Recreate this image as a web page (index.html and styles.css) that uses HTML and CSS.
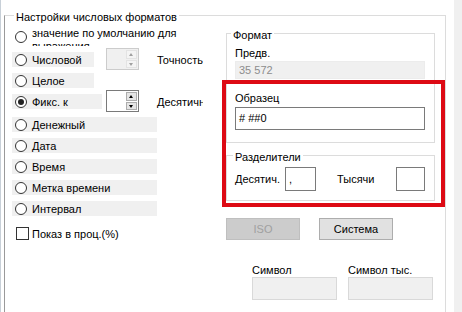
FILE: index.html
```html
<!DOCTYPE html>
<html lang="ru">
<head>
    <meta charset="utf-8">
    <title>Настройки числовых форматов</title>
    <link rel="stylesheet" href="styles.css">
</head>
<body>
<div class="side"></div>
<div class="group outer">
    <span class="caption">Настройки числовых форматов</span>
    <div class="cols">
        <div class="left">
            <div class="opt opt-first">
                <span class="radio"></span>
                <span class="label two-lines">значение по умолчанию для выражения</span>
            </div>
            <div class="opt">
                <span class="pick w82"><span class="radio"></span><span class="label">Числовой</span></span>
                <span class="spin disabled"><span class="spin-text"></span><span class="spin-btns"><i class="up"></i><i class="down"></i></span></span>
                <span class="spin-label">Точность</span>
            </div>
            <div class="opt">
                <span class="pick w82"><span class="radio"></span><span class="label">Целое</span></span>
            </div>
            <div class="opt">
                <span class="pick w90"><span class="radio on"></span><span class="label">Фикс. к</span></span>
                <span class="spin near"><span class="spin-text"></span><span class="spin-btns"><i class="up"></i><i class="down"></i></span></span>
                <span class="spin-label">Десятичные знаки</span>
            </div>
            <div class="opt opt-gap">
                <span class="pick w145"><span class="radio"></span><span class="label">Денежный</span></span>
            </div>
            <div class="opt">
                <span class="pick w145"><span class="radio"></span><span class="label">Дата</span></span>
            </div>
            <div class="opt">
                <span class="pick w145"><span class="radio"></span><span class="label">Время</span></span>
            </div>
            <div class="opt">
                <span class="pick w145"><span class="radio"></span><span class="label">Метка времени</span></span>
            </div>
            <div class="opt">
                <span class="pick w145"><span class="radio"></span><span class="label">Интервал</span></span>
            </div>
            <div class="opt opt-check">
                <span class="check"></span><span class="label">Показ в проц.(%)</span>
            </div>
        </div>

        <div class="right">
            <div class="group format">
                <span class="caption">Формат</span>
                <div class="field-label first">Предв.</div>
                <div class="input readonly">35 572</div>
                <div class="field-label second">Образец</div>
                <div class="input tall"># ##0</div>
            </div>

            <div class="group seps">
                <span class="caption">Разделители</span>
                <div class="sep-row">
                    <span class="sep-label dec">Десятич.</span>
                    <span class="input small w31">,</span>
                    <span class="sep-label thou">Тысячи</span>
                    <span class="input small w29"></span>
                </div>
            </div>

            <div class="buttons">
                <span class="btn disabled">ISO</span>
                <span class="btn">Система</span>
            </div>

            <div class="symbols">
                <div class="symbol">
                    <span class="symbol-label">Символ</span>
                    <span class="input faded"></span>
                </div>
                <div class="symbol">
                    <span class="symbol-label">Символ тыс.</span>
                    <span class="input faded"></span>
                </div>
            </div>
        </div>
    </div>
</div>
<div class="scroll"></div>

<div class="highlight"></div>
</body>
</html>
```

FILE: styles.css
```css
* {
    margin: 0;
    padding: 0;
    box-sizing: border-box;
}

body {
    position: relative;
    display: flex;
    width: 462px;
    height: 312px;
    overflow: hidden;
    background: #fff;
    color: #000;
    font-family: "Liberation Sans", Arial, sans-serif;
    font-size: 11px;
    line-height: 14px;
}

.side {
    width: 4px;
    border-left: 1px solid #c8d0d8;
}

.group {
    border: 1px solid #dcdcdc;
}

.group > .caption {
    display: block;
    width: max-content;
    margin-top: -6px;
    padding: 0 2px;
    background: #fff;
    line-height: 14px;
}

.outer {
    width: 442px;
    margin-top: 15px;
    border-left-color: #9a9a9a;
    border-bottom: none;
}

.outer > .caption {
    margin-left: 9px;
}

.scroll {
    width: 8px;
    margin-left: 8px;
    background: #f0f0f0;
}

.cols {
    display: flex;
    padding-left: 7px;
}

/* left column: format options */
.left {
    width: 191px;
    padding-top: 3px;
    overflow: hidden;
}

.opt {
    display: flex;
    align-items: center;
    height: 15px;
    margin-top: 6px;
    white-space: nowrap;
}

.opt-first {
    height: 19px;
    margin-top: 0;
    padding-left: 3px;
    overflow: hidden;
}

.opt-first .label {
    white-space: normal;
    width: 165px;
    line-height: 13px;
    height: 26px;
    margin-top: 7px;
}

.opt-gap {
    margin-top: 8px;
}

.opt-check {
    margin-top: 10px;
    padding-left: 4px;
}

.pick {
    display: flex;
    flex: none;
    align-items: center;
    height: 15px;
    padding-left: 3px;
    background: #f0f0f0;
}

.w82 { width: 82px; }
.w90 { width: 90px; }
.w145 { width: 145px; }

.radio {
    position: relative;
    flex: none;
    width: 12px;
    height: 12px;
    border: 1px solid #333;
    border-radius: 50%;
    background: #fff;
}

.radio.on::after {
    content: "";
    position: absolute;
    left: 2px;
    top: 2px;
    width: 6px;
    height: 6px;
    border-radius: 50%;
    background: #222;
}

.label {
    margin-left: 5px;
}

.check {
    flex: none;
    width: 13px;
    height: 13px;
    border: 1px solid #333;
    background: #fff;
}

.opt-check .label {
    margin-left: 3px;
}

.spin {
    display: flex;
    flex: none;
    width: 33px;
    height: 22px;
    margin: -4px 0 -3px 12px;
    border: 1px solid #7a7a7a;
    background: #fff;
}

.spin.near {
    margin-left: 4px;
}

.spin.disabled {
    border-color: #cccccc;
    background: #f0f0f0;
}

.spin-text {
    flex: 1;
}

.spin-btns {
    display: flex;
    flex-direction: column;
    width: 11px;
    margin: 1px 1px 1px 0;
    gap: 1px;
}

.spin-btns i {
    position: relative;
    flex: 1;
    border: 1px solid #adadad;
    background: #e5e5e5;
}

.spin.disabled .spin-btns i {
    border-color: #e3e3e3;
    background: #f4f4f4;
}

.spin-btns i::after {
    content: "";
    position: absolute;
    left: 2px;
    top: 2px;
    border-left: 2.5px solid transparent;
    border-right: 2.5px solid transparent;
}

.spin-btns .up::after {
    border-bottom: 3px solid #000;
}

.spin-btns .down::after {
    border-top: 3px solid #000;
}

.spin.disabled .up::after {
    border-bottom-color: #a0a0a0;
}

.spin.disabled .down::after {
    border-top-color: #a0a0a0;
}

.spin-label {
    margin-left: 18px;
}

/* right column */
.right {
    width: 209px;
    margin-left: 23px;
    padding-top: 9px;
}

.format {
    height: 110px;
}

.format > .caption {
    margin-left: 4px;
}

.field-label {
    padding-left: 8px;
}

.field-label.first {
    margin-top: 4px;
}

.field-label.second {
    margin-top: 12px;
}

.input {
    display: block;
    border: 1px solid #7a7a7a;
    background: #fff;
    padding-left: 3px;
    white-space: nowrap;
}

.format .input {
    width: 190px;
    margin-left: 8px;
}

.input.readonly {
    height: 18px;
    margin-top: 1px;
    line-height: 16px;
    border-color: #ececec;
    background: #f0f0f0;
    color: #8d8d8d;
}

.input.tall {
    height: 23px;
    margin-top: 2px;
    line-height: 21px;
}

.seps {
    height: 46px;
    margin-top: 12px;
}

.seps > .caption {
    margin-left: 6px;
}

.sep-row {
    display: flex;
    align-items: center;
    margin-top: 3px;
    padding-left: 8px;
}

.sep-label.dec {
    width: 50px;
}

.sep-label.thou {
    width: 59px;
    margin-left: 21px;
}

.input.small {
    height: 24px;
    line-height: 22px;
}

.w31 { width: 31px; }
.w29 { width: 29px; }

.buttons {
    display: flex;
    gap: 19px;
    margin-top: 17px;
}

.btn {
    display: block;
    width: 74px;
    height: 22px;
    border: 1px solid #adadad;
    background: #e1e1e1;
    line-height: 20px;
    text-align: center;
}

.btn.disabled {
    border-color: #bfbfbf;
    background: #cccccc;
    color: #a0a0a0;
}

.symbols {
    display: flex;
    gap: 11px;
    margin-top: 24px;
    padding-left: 26px;
}

.symbol {
    display: flex;
    flex-direction: column;
    width: 85px;
}

.symbol-label {
    line-height: 12px;
}

.input.faded {
    height: 23px;
    margin-top: 1px;
    border-color: #d9d9d9;
    background: #f0f0f0;
}

.highlight {
    position: absolute;
    left: 222px;
    top: 80px;
    width: 223px;
    height: 127px;
    border: 4px solid #dd0a14;
}
```
